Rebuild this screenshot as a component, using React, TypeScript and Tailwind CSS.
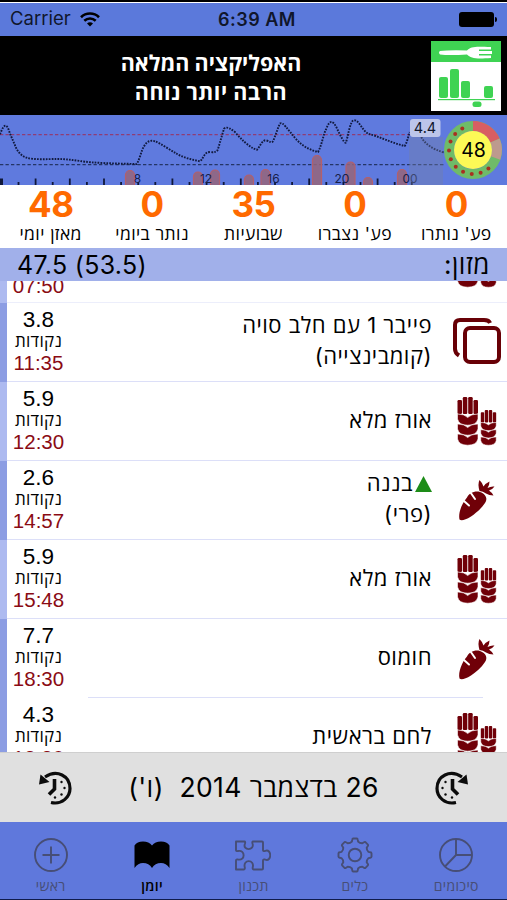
import type { ReactNode } from 'react'

type FoodIcon = 'combo' | 'grain' | 'carrot'

interface Entry {
  points: string
  time: string
  lines: string[]
  icon: FoodIcon
  group: 'light' | 'dark'
  marked?: boolean
  shortDivider?: boolean
}

const stats = [
  { value: '48', label: 'מאזן יומי' },
  { value: '0', label: 'נותר ביומי' },
  { value: '35', label: 'שבועיות' },
  { value: '0', label: "פע' נצברו" },
  { value: '0', label: "פע' נותרו" },
]

const entries: Entry[] = [
  { points: '3.8', time: '11:35', lines: ['פייבר 1 עם חלב סויה', '(קומבינצייה)'], icon: 'combo', group: 'dark' },
  { points: '5.9', time: '12:30', lines: ['אורז מלא'], icon: 'grain', group: 'light' },
  { points: '2.6', time: '14:57', lines: ['בננה', '(פרי)'], icon: 'carrot', group: 'dark', marked: true },
  { points: '5.9', time: '15:48', lines: ['אורז מלא'], icon: 'grain', group: 'light' },
  { points: '7.7', time: '18:30', lines: ['חומוס'], icon: 'carrot', group: 'dark', shortDivider: true },
  { points: '4.3', time: '18:30', lines: ['לחם בראשית'], icon: 'grain', group: 'dark' },
]

function StatusBar() {
  return (
    <div dir="ltr" className="grid h-[36px] shrink-0 grid-cols-3 items-center border-t-2 border-black bg-[#5b79db] px-[10px] text-[18px] text-[#10162b] shadow-[inset_0_1px_0_#fff]">
      <div className="flex items-center gap-[9px] text-[18.5px]">
        <span>Carrier</span>
        <svg width="20" height="15" viewBox="0 0 20 15" fill="none" stroke="#000" strokeWidth="2.6">
          <path d="M1 5.2C6 .3 14 .3 19 5.2" />
          <path d="M4.3 8.7c3.3-3 8.1-3 11.4 0" />
          <path d="M7 11.4c1.7-1.6 4.3-1.6 6 0L10 14.500z" fill="#000" stroke="none" />
        </svg>
      </div>
      <span className="pl-[7px] text-center font-semibold tracking-[0.5px]">6:39 AM</span>
      <div className="flex items-center justify-end">
        <div className="h-[15px] w-[35px] rounded-[3px] bg-black" />
        <div className="ml-px h-[5px] w-[2px] rounded-r bg-black" />
      </div>
    </div>
  )
}

function Banner() {
  return (
    <div className="flex h-[79px] shrink-0 items-center bg-black pr-[6px]">
      <svg width="70" height="70" viewBox="0 0 70 70" className="shrink-0">
        <rect width="70" height="70" fill="#fff" />
        <rect width="70" height="21" fill="#3fd353" />
        <path d="M9 10Q18 9 36 9.500C40 5 45 5.500 60 6v2.500H48v1.500h13v3H48v1.500h12v2.500C45 18 40 17.500 36 13.500Q18 14.500 9 13.500Q7 11.500 9 10z" fill="#fff" />
        <g fill="#3fd353">
          <rect x="8" y="36" width="9" height="21" rx="2" />
          <rect x="19" y="28" width="9" height="29" rx="2" />
          <rect x="30" y="40" width="9" height="17" rx="2" />
          <rect x="53" y="45" width="9" height="12" rx="2" />
          <rect x="7" y="58" width="57" height="1.200" />
          <rect x="41.500" y="60.500" width="9" height="5.500" rx="2.500" />
        </g>
      </svg>
      <div className="flex-1 pt-[4px] pr-[10px] pl-[11px] text-center text-[21.5px] leading-[29px] font-bold text-white">
        <p className="pr-[10px]">האפליקציה המלאה</p>
        <p className="pr-[10px] tracking-[0.5px]">הרבה יותר נוחה</p>
      </div>
    </div>
  )
}

const curve =
  'M0 19.300C2 14 4 10 6 10.700C8 11.500 9 16 10 18.700L15 30.300C17 36 21 41 26.700 42.700C34 45 48 44 56.700 44C66 44 72 45 80 46C92 48 115 48.500 136.700 49C140 44 141 36 144 31.300C147 26 151 25 155 26.300C160 28 170 35 176.700 38.700C184 43 192 44.500 200 46.300C204 43 204 37 210 37Q217 38 218 34L224 13.700C227 11 231 14 235 17Q245 29 254 33.700L257 34.700C260 32 262 25 265.700 25.300C270 26 272 30 274 24L279.700 8.700C283 6 287 14 296.300 24.300C302 31 310 35 318 37C322 30 323 20 326.300 13.700C330 4 333 6 336.300 12C340 20 344 28 345.700 27.700C348 23 350 5 354 5.300C359 5 362 15 368 18.700C378 21 392 28 404.700 31C407 28 408 22 409.700 17M421.300 22C425 29 432 34 444.700 37.700'

// [left edge, top] of each meal bar
const mealBars = [
  [125, 55],
  [193, 56.5],
  [210, 54.5],
  [244, 59.5],
  [260.5, 54],
  [312, 40],
  [345.500, 46.5],
  [363, 62],
  [397, 54],
]

const hours = [
  ['8', 137.5],
  ['12', 206],
  ['16', 273.5],
  ['20', 342],
  ['00', 410],
] as const

const gaugeDots = Array.from({ length: 10 }, (_, i) => {
  const a = ((140 + i * 21.5) * Math.PI) / 180
  return [473 + 24 * Math.sin(a), 35 - 24 * Math.cos(a)]
})

function DayChart() {
  return (
    <svg width="507" height="70" viewBox="0 0 507 70" direction="ltr" className="block shrink-0 bg-[#5f7ade]">
      <path d="M0 19.700H440" stroke="#8f3c74" strokeWidth="1.3" strokeDasharray="3.300 2.200" />
      <path d="M0 49.700H444" stroke="#243565" strokeWidth="1.200" strokeDasharray="3.300 2.200" />
      {Array.from({ length: 25 }, (_, i) => (
        <rect key={i} x={i === 0 ? 0 : i * 17.1 + 0.5} y={i % 2 || (i % 4 === 0 && i > 4) ? 67 : 63.5} width={i === 0 ? 3 : 1.8} height="7" fill="#10183a" />
      ))}
      {mealBars.map(([x, y]) => (
        <path key={x} d={`M${x + 0.5} 71V${y + 5}a4.500 4.500 0 0 1 9 0V71`} fill="#96657a" fillOpacity=".85" stroke="#b45f6b" strokeWidth="1.200" />
      ))}
      {hours.map(([h, x]) => (
        <text key={h} x={x} y="67.500" textAnchor="middle" fontSize="12" fill="#17204a">{h}</text>
      ))}
      <path d={curve} fill="none" stroke="#111a40" strokeWidth="1.900" strokeDasharray="1.700 1.200" />
      <rect x="409" y="22" width="34" height="48" fill="#747fa8" fillOpacity=".4" />
      <rect x="410" y="4" width="30.500" height="18" rx="3" fill="#bcc5ea" />
      <text x="425" y="18" textAnchor="middle" fontSize="14.500" fill="#10162b">4.4</text>
      <g fill="none" strokeWidth="10">
        <circle cx="473" cy="35" r="24" stroke="#6fbb68" />
        <path d="M473 11A24 24 0 0 1 495 25.500" stroke="#d85e62" />
        <path d="M495 25.500A24 24 0 0 1 495.500 43" stroke="#bd9a8e" />
      </g>
      <circle cx="473" cy="35" r="19" fill="#fdf956" />
      {gaugeDots.map(([x, y]) => (
        <circle key={x} cx={x} cy={y} r="2" fill="#a92f20" />
      ))}
      <text x="473.500" y="42" textAnchor="middle" fontSize="19.500" fill="#000">48</text>
    </svg>
  )
}

function Stats() {
  return (
    <div dir="ltr" className="grid h-[63px] shrink-0 grid-cols-5 bg-white text-center">
      {stats.map(s => (
        <div key={s.label}>
          <p className="h-[38px] text-[35px] leading-[38px] font-bold tracking-[-0.5px] text-[#ff6a00]">{s.value}</p>
          <p dir="rtl" className="text-[17.5px] leading-[21px] tracking-[0.4px] whitespace-nowrap">{s.label}</p>
        </div>
      ))}
    </div>
  )
}

function ComboIcon() {
  return (
    <svg width="50" height="50" viewBox="0 0 50 50" fill="none" stroke="#680006" strokeWidth="4">
      <path d="M7 38.500Q3 36 3 32V8q0-5 5-5h24q5 0 6 3" />
      <rect x="13" y="11" width="34" height="34" rx="5" />
    </svg>
  )
}

function Ear() {
  return (
    <g fill="#700008">
      <rect x="0" y="3" width="4.500" height="14" rx="1.200" />
      <rect x="5.300" y="0" width="4.500" height="17" rx="1.200" />
      <rect x="10.700" y="0" width="4.500" height="17" rx="1.200" />
      <rect x="16" y="3" width="4.500" height="14" rx="1.200" />
      {[18, 28, 38].map(y => (
        <path key={y} d={`M0 ${y - 1}Q7 ${y - 1} 10.200 ${y + 2.5}Q13.400 ${y - 1} 20.500 ${y - 1}V${y + 4}Q19 ${y + 10.2} 10.200 ${y + 10.2}Q1.500 ${y + 10.2} 0 ${y + 4}z`} stroke="#fff" strokeWidth=".6" />
      ))}
    </g>
  )
}

function GrainIcon() {
  return (
    <svg width="50" height="50" viewBox="0 0 50 50">
      <g transform="translate(5.500 1)"><Ear /></g>
      <g transform="translate(28.800 14) scale(.75 .73)"><Ear /></g>
    </svg>
  )
}

function CarrotIcon() {
  return (
    <svg width="50" height="50" viewBox="0 0 50 50">
      <path d="M7.500 44.500C6 38 10 28 15 22.500C17 18 23 15.500 28 17C34 19 36 24 33 28C29 34 24 38 19 41.500Q10 47 7.500 44.500z" fill="#700008" />
      <path d="M18.500 17.500l4.500 6.500M12 26l5 4.500" stroke="#fff" strokeWidth="2" strokeLinecap="round" />
      <path d="M27.500 16Q25.500 9 27.500 5Q30.500 8 31.500 11.500Q34 8 37.500 6.500Q37.500 10 35.500 13Q39 11 42.500 11.500Q40.500 14.500 37 15.500Q40 17.500 41.500 20.500Q37 20.500 34 18.500Q31 16 27.500 16z" fill="#700008" />
    </svg>
  )
}

const foodIcons: Record<FoodIcon, ReactNode> = {
  combo: <ComboIcon />,
  grain: <GrainIcon />,
  carrot: <CarrotIcon />,
}

// what is left of the row scrolled under the section header
function ScrolledRow() {
  return (
    <div dir="ltr" className="flex h-[22px] shrink-0 overflow-hidden">
      <div className="w-[7px] shrink-0 bg-[#adbaf0]" />
      <div className="flex flex-1 items-end border-b border-[#eceefb] bg-white">
        <p className="w-[63px] pb-[3px] text-center font-['Liberation_Sans'] text-[20.5px] leading-[27px] text-[#8a0b14]">07:50</p>
        <div className="mr-[5px] mb-[14px] ml-auto w-[50px]"><GrainIcon /></div>
      </div>
    </div>
  )
}

function EntryRow({ entry }: { entry: Entry }) {
  return (
    <div dir="ltr" className="flex h-[79px] shrink-0">
      <div className={`w-[7px] shrink-0 ${entry.group === 'dark' ? 'bg-[#8c9de3]' : 'bg-[#adbaf0]'}`} />
      <div className={`relative flex flex-1 bg-white ${entry.shortDivider ? '' : 'border-b border-[#dcdff8]'}`}>
        <div className="w-[63px] pt-[5px] text-center">
          <p className="font-['Liberation_Sans'] text-[22.5px] leading-[24px]">{entry.points}</p>
          <p dir="rtl" className="text-[17px] leading-[18px] tracking-[0.3px]">נקודות</p>
          <p className="font-['Liberation_Sans'] text-[20.5px] leading-[26px] text-[#8a0b14]">{entry.time}</p>
        </div>
        <div dir="rtl" className="flex flex-1 flex-col justify-center pr-[20px] pb-[2px] text-[22px] leading-[31px] tracking-[0.5px]">
          {entry.lines.map((line, i) => (
            <p key={line} className="flex items-center">
              {entry.marked && i === 0 && (
                <svg width="17" height="16" viewBox="0 0 17 16" className="ml-[2px]">
                  <path d="M8.500 0L17 16H0z" fill="#1d8c18" />
                </svg>
              )}
              {line}
            </p>
          ))}
        </div>
        <div className="mr-[5px] flex w-[50px] items-center">{foodIcons[entry.icon]}</div>
        {entry.shortDivider && <div className="absolute right-[24px] bottom-0 left-[81px] h-px bg-[#dcdff8]" />}
      </div>
    </div>
  )
}

function ClockIcon({ back = false }: { back?: boolean }) {
  return (
    <svg width="34" height="34" viewBox="0 0 34 34" fill="none" stroke="#0b0b0b" className={back ? '-scale-x-100' : ''}>
      <path d="M21 31.500C10 34 2 26 2 17.500C2 5 15-2 27 6" strokeWidth="3.200" />
      <path d="M31.500 3.500L33 13.500L22.500 11z" fill="#0b0b0b" stroke="none" />
      <path d="M17.500 8V18L23 23.500" strokeWidth="3.600" />
      <g fill="#0b0b0b" stroke="none">
        <circle cx="10.500" cy="11" r="1.200" />
        <circle cx="7.500" cy="17" r="1.200" />
        <circle cx="10.500" cy="23.500" r="1.200" />
        <circle cx="17" cy="26.500" r="1.200" />
      </g>
    </svg>
  )
}

function DateBar() {
  return (
    <div dir="ltr" className="flex h-[70px] shrink-0 items-center justify-between border-t border-[#cfcfcf] bg-[#e0e0e0] px-[38px]">
      <ClockIcon back />
      <p dir="rtl" className="text-[26.5px] tracking-[0.4px] whitespace-pre">26 בדצמבר 2014  (ו')</p>
      <ClockIcon />
    </div>
  )
}

// eight rounded teeth around the hub
const gearPath =
  Array.from({ length: 8 }, (_, i) => {
    const at = (deg: number, r: number) => {
      const a = ((i * 45 + deg) * Math.PI) / 180
      return `${(18 + r * Math.sin(a)).toFixed(2)} ${(18 - r * Math.cos(a)).toFixed(2)}`
    }
    return `${i ? 'L' : 'M'}${at(-13, 13.8)}L${at(-10, 15.6)}Q${at(-9, 16.6)} ${at(-6, 16.6)}L${at(6, 16.6)}Q${at(9, 16.6)} ${at(10, 15.6)}L${at(13, 13.8)}Q${at(22.5, 12.6)} ${at(32, 13.8)}`
  }).join('') + 'Z'

const tabs: { label: string; icon: ReactNode; active?: boolean }[] = [
  { label: 'ראשי', icon: <><circle cx="18" cy="18" r="16" /><path d="M18 9.500v17M9.500 18h17" /></> },
  {
    label: 'יומן',
    active: true,
    icon: <path d="M.5 8.500Q3 4.500 9 4.500Q15 4.500 18 8.500Q21 4.500 27 4.500Q33 4.500 35.500 8.500V31Q32 26 27 26Q21 26 18 31Q15 26 9 26Q4 26 .5 31z" fill="#000" stroke="none" />,
  },
  {
    label: 'תכנון',
    icon: <path d="M1 4.500H9.500Q10.500 4.500 10 6.500C7 14 20 14 17.500 6.500Q17 4.500 18 4.500H27Q28 4.500 28 5.500V13Q28 14.500 30 14C37 11 37 25.500 30 22.500Q28 22 28 23.500V31.500Q28 32.500 27 32.500H18.500Q17.500 32.500 17.700 30.500C20 22 7.500 22 9.800 30.500Q10 32.500 9 32.500H1V23.500Q1 22 3 22.500C10.500 24 10.500 12.500 3 14Q1 14.500 1 13z" strokeLinejoin="round" />,
  },
  { label: 'כלים', icon: <><circle cx="18" cy="18" r="6.300" /><path d={gearPath} strokeLinejoin="round" /></> },
  { label: 'סיכומים', icon: <><circle cx="18" cy="18" r="16" /><path d="M18 2V18H34M18 18L7 29.500" /></> },
]

function TabBar() {
  return (
    <div dir="ltr" className="grid h-[78px] shrink-0 grid-cols-5 border-b border-[#101c4c] bg-[#5f78dc]">
      {tabs.map(tab => (
        <div key={tab.label} className={`flex flex-col items-center pt-[15px] ${tab.active ? 'text-black' : 'text-[#474e76]'}`}>
          <svg width="36" height="36" viewBox="0 0 36 36" fill="none" stroke="currentColor" strokeWidth="1.900">
            {tab.icon}
          </svg>
          <span dir="rtl" className={`mt-[4px] text-[14px] leading-[18px] tracking-[0.3px] ${tab.active ? 'font-semibold' : ''}`}>{tab.label}</span>
        </div>
      ))}
    </div>
  )
}

export default function App() {
  return (
    <div dir="rtl" className="flex h-[900px] w-[507px] flex-col overflow-hidden bg-white font-['Inter','Open_Sans',sans-serif] text-black">
      <StatusBar />
      <Banner />
      <DayChart />
      <Stats />
      <div className="flex h-[33px] shrink-0 items-center justify-between bg-[#a1b0ea] px-[17px] text-[25px]">
        <span className="text-[26px] tracking-[0.5px]">מזון:</span>
        <span dir="ltr" className="pt-[2px] tracking-[0.3px]">47.5 (53.5)</span>
      </div>
      <div className="flex min-h-0 flex-1 flex-col overflow-hidden">
        <ScrolledRow />
        {entries.map((entry, i) => (
          <EntryRow key={i} entry={entry} />
        ))}
      </div>
      <DateBar />
      <TabBar />
    </div>
  )
}
